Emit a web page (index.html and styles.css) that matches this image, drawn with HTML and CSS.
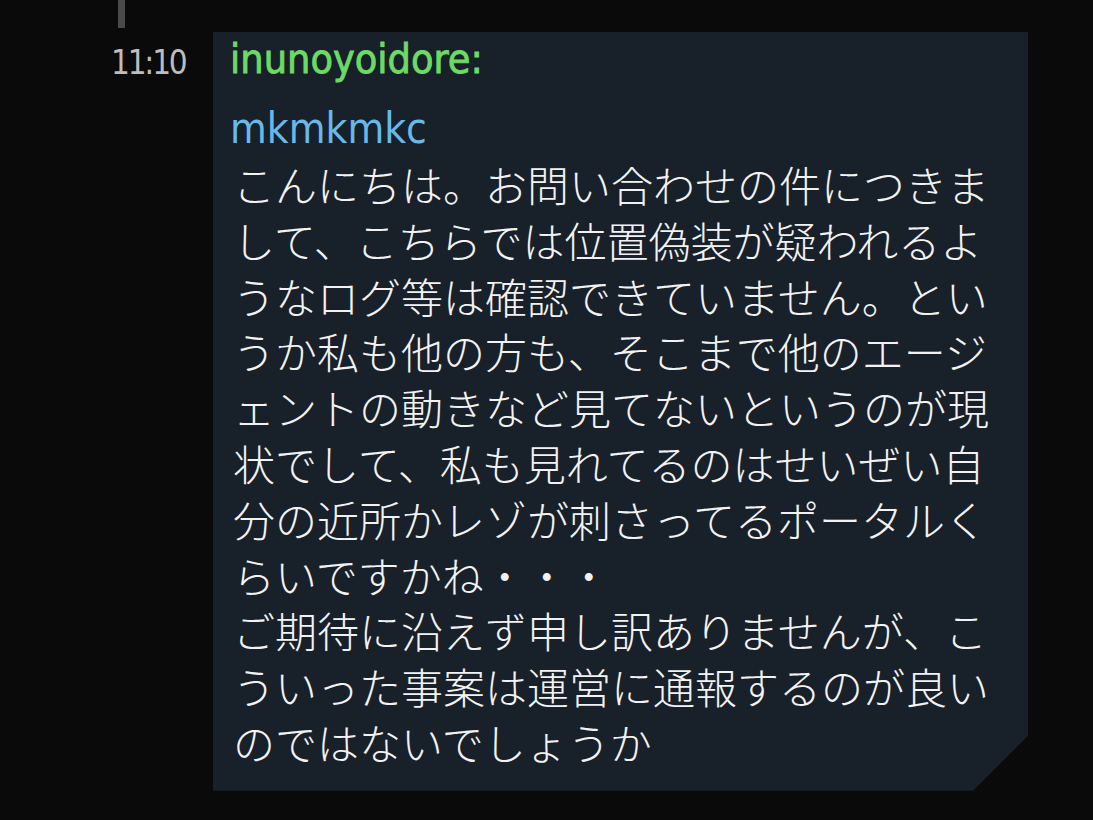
FILE: index.html
```html
<!DOCTYPE html>
<html lang="ja">
<head>
<meta charset="utf-8">
<title>chat</title>
<link rel="stylesheet" href="styles.css">
</head>
<body>
<div class="prev-tail"></div>
<div class="row">
  <div class="time">11:10</div>
  <div class="bubble">
    <div class="name">inunoyoidore:</div>
    <div class="mention">mkmkmkc</div>
    <div class="text">こんにちは。お問い合わせの件につきまして、こちらでは位置偽装が疑われるようなログ等は確認できていません。というか私も他の方も、そこまで他のエージェントの動きなど見てないというのが現状でして、私も見れてるのはせいぜい自分の近所かレゾが刺さってるポータルくらいですかね・・・<br>ご期待に沿えず申し訳ありませんが、こういった事案は運営に通報するのが良いのではないでしょうか</div>
  </div>
</div>
</body>
</html>
```
FILE: styles.css
```css
html, body {
  margin: 0;
  padding: 0;
  background: #0a0a0a;
  width: 1093px;
  height: 820px;
  overflow: hidden;
}

.prev-tail {
  margin-left: 118px;
  width: 7px;
  height: 28px;
  background: #4a4a4a;
}

.row {
  display: flex;
  align-items: flex-start;
  margin-top: 4px;
}

.time {
  width: 213px;
  flex: none;
  box-sizing: border-box;
  padding-left: 111px;
  padding-top: 11px;
  font-family: "DejaVu Sans Condensed", "DejaVu Sans", sans-serif;
  font-size: 33px;
  letter-spacing: -2.2px;
  line-height: 40px;
  color: #bdbdbd;
  white-space: nowrap;
}

.bubble {
  width: 815px;
  flex: none;
  box-sizing: border-box;
  background: #18202a;
  padding: 5px 30px 21px 20px;
  clip-path: polygon(0 0, 100% 0, 100% calc(100% - 55px), calc(100% - 55px) 100%, 0 100%);
}

.name {
  font-family: "DejaVu Sans Condensed", "DejaVu Sans", sans-serif;
  font-size: 41px;
  line-height: 44px;
  color: #6cdb64;
  -webkit-text-stroke: 0.8px #6cdb64;
  margin-left: -3px;
}

.mention {
  font-family: "DejaVu Sans Condensed", "DejaVu Sans", sans-serif;
  font-size: 42px;
  line-height: 48px;
  color: #66b9e9;
  margin-top: 24px;
  margin-left: -3px;
}

.text {
  margin-top: 3px;
  font-family: "Noto Sans CJK JP", "Noto Sans", sans-serif;
  font-weight: 300;
  font-size: 42px;
  line-height: 55.8px;
  color: #f2f2f2;
  line-break: normal;
}
```
